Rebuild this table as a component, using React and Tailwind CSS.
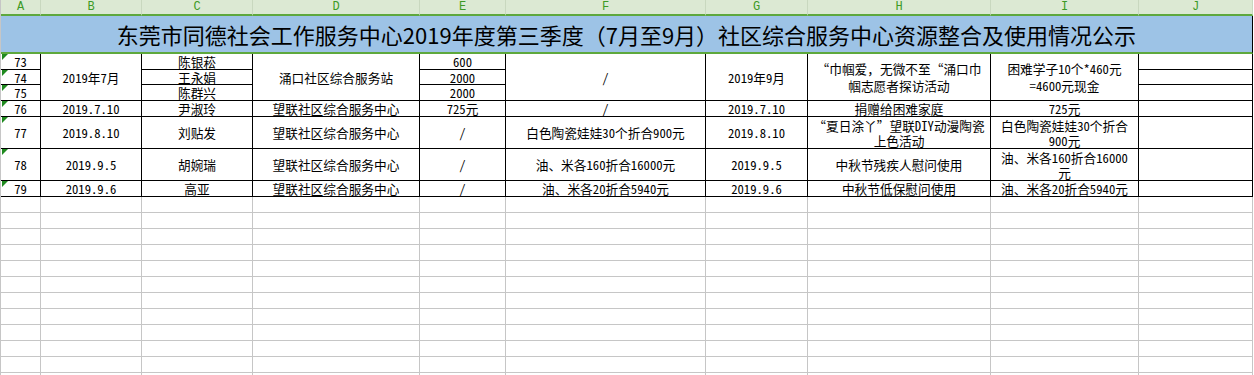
import React from 'react';

const COLS = ['A', 'B', 'C', 'D', 'E', 'F', 'G', 'H', 'I', 'J'];

const TITLE =
  '东莞市同德社会工作服务中心2019年度第三季度（7月至9月）社区综合服务中心资源整合及使用情况公示';

// rows 76-79, one entry per column
const rows = [
  ['76', '2019.7.10', '尹淑玲', '望联社区综合服务中心', '725元', '/', '2019.7.10', '捐赠给困难家庭', '725元', ''],
  ['77', '2019.8.10', '刘贴发', '望联社区综合服务中心', '/', '白色陶瓷娃娃30个折合900元', '2019.8.10', ['“夏日涂丫”望联DIY动漫陶瓷', '上色活动'], ['白色陶瓷娃娃30个折合', '900元'], ''],
  ['78', '2019.9.5', '胡婉瑞', '望联社区综合服务中心', '/', '油、米各160折合16000元', '2019.9.5', '中秋节残疾人慰问使用', ['油、米各160折合16000', '元'], ''],
  ['79', '2019.9.6', '高亚', '望联社区综合服务中心', '/', '油、米各20折合5940元', '2019.9.6', '中秋节低保慰问使用', '油、米各20折合5940元', ''],
];

function Mark() {
  return (
    <svg className="absolute left-[1px] top-0" width="6" height="6" viewBox="0 0 6 6">
      <polygon points="0,0 6,0 0,6" fill="#1f8a1f" />
    </svg>
  );
}

function Cell({ className = '', mark, children }) {
  const lines = Array.isArray(children) ? children : [children];
  return (
    <div
      className={`relative flex flex-col items-center justify-center overflow-hidden whitespace-nowrap text-center leading-[15px] border-r border-b border-black ${className}`}
    >
      {mark && <Mark />}
      {lines.map((l, i) => (
        <span key={i}>{l}</span>
      ))}
    </div>
  );
}

export default function App() {
  return (
    <div className="w-[1254px] h-[375px] overflow-hidden bg-white text-black">
      <div className="grid grid-cols-[40px_101px_111px_167px_86px_200px_102px_183px_148px_114px] grid-rows-[16px_38px_16px_15px_16px_16px_32px_32px_16px] auto-rows-[16px] border-l border-[#c6c6c6] text-[12.7px] font-['Noto_Sans_Mono_CJK_SC','Noto_Sans_CJK_SC',sans-serif]">
        {/* column letters */}
        {COLS.map((c) => (
          <div
            key={c}
            className="flex items-center justify-center bg-[#dce9d3] border-r border-b-2 border-r-[#c9d8bf] border-b-[#5ea83d] text-[12px] leading-none text-[#3d9a26] font-['Liberation_Mono',monospace]"
          >
            {c}
          </div>
        ))}

        {/* title */}
        <div className="col-span-10 flex items-center justify-center bg-[#9dc3e6] border-r border-b-2 border-r-black border-b-[#5ea83d] text-[22px] font-['Noto_Sans_CJK_SC',sans-serif]">
          {TITLE}
        </div>

        {/* rows 73-75 */}
        <Cell mark>73</Cell>
        <Cell className="row-span-3">2019年7月</Cell>
        <Cell>陈银菘</Cell>
        <Cell className="row-span-3">涌口社区综合服务站</Cell>
        <Cell>600</Cell>
        <Cell className="row-span-3">/</Cell>
        <Cell className="row-span-3">2019年9月</Cell>
        <Cell className="row-span-3 leading-[17px]">{['“巾帼爱，无微不至“涌口巾', '帼志愿者探访活动']}</Cell>
        <Cell className="row-span-3 leading-[17px]">{['困难学子10个*460元', '=4600元现金']}</Cell>
        <Cell />

        <Cell mark>74</Cell>
        <Cell>王永娟</Cell>
        <Cell>2000</Cell>
        <Cell />

        <Cell mark>75</Cell>
        <Cell>陈群兴</Cell>
        <Cell>2000</Cell>
        <Cell />

        {rows.map((r) =>
          r.map((v, i) => (
            <Cell key={r[0] + i} mark={i === 0}>
              {v}
            </Cell>
          ))
        )}

        {/* empty sheet below */}
        {Array.from({ length: 120 }).map((_, i) => (
          <div key={'g' + i} className="border-r border-b border-[#c6c6c6]" />
        ))}
      </div>
    </div>
  );
}
